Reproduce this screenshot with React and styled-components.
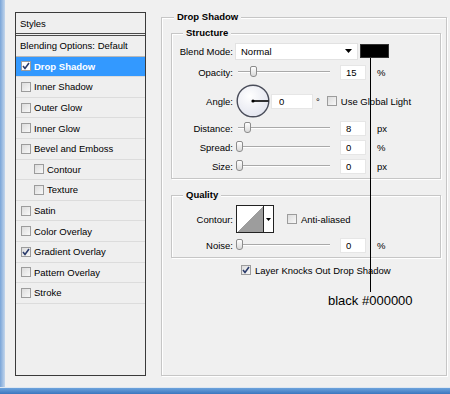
import styled, { createGlobalStyle } from 'styled-components';

const GlobalStyle = createGlobalStyle`
	html, body {
		margin: 0;
		padding: 0;
	}
	body {
		font-family: "Liberation Sans", Arial, sans-serif;
		font-size: 9.5px;
		color: #000;
	}
`;

const styleItems = [
	{ name: 'Drop Shadow', checked: true, selected: true },
	{ name: 'Inner Shadow' },
	{ name: 'Outer Glow' },
	{ name: 'Inner Glow' },
	{ name: 'Bevel and Emboss' },
	{ name: 'Contour', indent: true },
	{ name: 'Texture', indent: true },
	{ name: 'Satin' },
	{ name: 'Color Overlay' },
	{ name: 'Gradient Overlay', checked: true },
	{ name: 'Pattern Overlay' },
	{ name: 'Stroke' },
];

const Window = styled.div`
	width: 450px;
	height: 394px;
	display: flex;
	flex-direction: column;
	background: #f0f0f0;
	overflow: hidden;
`;

const Body = styled.div`
	flex: 1;
	display: flex;
	min-height: 0;
`;

const SideEdge = styled.div`
	width: 5px;
	background: linear-gradient(to right, #7aa5d8, #c3d6ec);
`;

const BottomBand = styled.div`
	height: 6px;
	border-top: 1px solid #dde7f2;
	background: linear-gradient(#6ea3dc, #3b76bf);
`;

const Content = styled.div`
	flex: 1;
	display: flex;
	align-items: flex-start;
	gap: 15px;
	padding: 12px 0 0 10px;
`;

const StylesPanel = styled.div`
	box-sizing: border-box;
	width: 131px;
	height: 364px;
	border: 1px solid #3a3a3a;
	background: #efefef;
	display: flex;
	flex-direction: column;
`;

const PanelHeader = styled.div`
	height: 20px;
	display: flex;
	align-items: center;
	padding-left: 4px;
	border-bottom: 3px double #4a4a4a;
`;

const StyleRow = styled.div`
	box-sizing: border-box;
	height: 20.6px;
	flex-shrink: 0;
	display: flex;
	align-items: center;
	gap: 3px;
	padding-left: ${(p) => (p.$indent ? 18 : p.$plain ? 4 : 5)}px;
	border-bottom: 1px solid ${(p) => (p.$dark ? '#b8b8b8' : '#dcdcdc')};
	background: ${(p) => (p.$selected ? '#3399ff' : 'transparent')};
	color: ${(p) => (p.$selected ? '#fff' : '#000')};
	font-weight: ${(p) => (p.$selected ? 'bold' : 'normal')};
`;

const Box = styled.span`
	box-sizing: border-box;
	width: 10px;
	height: 10px;
	flex-shrink: 0;
	display: inline-flex;
	align-items: center;
	justify-content: center;
	border: 1px solid #9c9c9c;
	background: ${(p) => (p.$light ? '#fff' : 'linear-gradient(135deg, #dcdcdc, #f8f8f8)')};
`;

const Checkbox = ({ checked, light }) => (
	<Box $light={light}>
		{checked && (
			<svg width="8" height="8" viewBox="0 0 8 8">
				<path d="M1 4 L3 6.5 L7 1" fill="none" stroke="#2a3b6b" strokeWidth="1.6" />
			</svg>
		)}
	</Box>
);

const GroupBox = styled.div`
	position: relative;
	box-sizing: border-box;
	border: 1px solid #c6c6c6;
	box-shadow: inset 1px 1px 0 #fff, 1px 1px 0 #fff;
`;

const OuterGroup = styled(GroupBox)`
	width: 286px;
	height: 359px;
	margin-top: 5px;
	padding: 15px 0 0 9px;
`;

const InnerGroup = styled(GroupBox)`
	width: 270px;
	margin-top: ${(p) => p.$mt || 0}px;
	padding: ${(p) => p.$pt}px 0 3px 0;
`;

const Title = styled.span`
	position: absolute;
	top: -7px;
	left: ${(p) => p.$left}px;
	padding: 0 3px;
	line-height: 12px;
	font-weight: bold;
	background: #f0f0f0;
`;

const Row = styled.div`
	display: flex;
	align-items: center;
	height: ${(p) => p.$h || 18}px;
	margin-top: ${(p) => p.$mt || 0}px;
	padding-left: ${(p) => p.$pl || 0}px;
`;

const Label = styled.span`
	width: 61px;
	flex-shrink: 0;
	text-align: right;
`;

const Select = styled.div`
	box-sizing: border-box;
	width: 123px;
	height: 17px;
	margin-left: 2px;
	display: flex;
	align-items: center;
	justify-content: space-between;
	padding: 0 5px 0 5px;
	background: #fff;
	border: 1px solid #e2e2e2;
`;

const Swatch = styled.div`
	box-sizing: border-box;
	width: 29px;
	height: 14px;
	margin-left: 2px;
	background: #000;
	border: 1px solid #333;
`;

const SliderTrack = styled.div`
	position: relative;
	width: 94px;
	height: 14px;
	margin-left: 3px;
	flex-shrink: 0;

	&::before {
		content: '';
		position: absolute;
		left: 2px;
		right: 0;
		top: 6px;
		border-top: 1px solid #a9a9a9;
		border-bottom: 1px solid #fff;
	}
`;

const Thumb = styled.span`
	position: absolute;
	top: 1px;
	box-sizing: border-box;
	width: 7px;
	height: 11px;
	border: 1px solid #8c8c8c;
	border-radius: 2px 2px 3px 3px;
	background: linear-gradient(#ffffff, #d9d9d9);
`;

const Slider = ({ pos }) => (
	<SliderTrack>
		<Thumb style={{ left: pos }} />
	</SliderTrack>
);

const Field = styled.input`
	box-sizing: border-box;
	width: ${(p) => p.$w || 26}px;
	height: 15px;
	margin-left: ${(p) => p.$ml ?? 10}px;
	padding: 0 0 0 ${(p) => p.$pad || 5}px;
	border: 1px solid #e6e6e6;
	background: #fff;
	font: inherit;
	color: #000;
	outline: none;
`;

const Unit = styled.span`
	margin-left: ${(p) => p.$ml ?? 11}px;
`;

const Dial = styled.svg`
	margin-left: 3px;
	flex-shrink: 0;
`;

const ContourPicker = styled.div`
	box-sizing: border-box;
	width: 38px;
	height: 28px;
	margin-left: 3px;
	display: flex;
	border: 1px solid #222;
	background: #fff;
`;

const ContourPreview = styled.div`
	flex: 1;
	background: linear-gradient(to bottom right, #fff 50%, #9d9d9d 50%);
`;

const ContourArrow = styled.div`
	width: 9px;
	display: flex;
	align-items: center;
	justify-content: center;
	border-left: 1px solid #222;
`;

const CheckLabel = styled.label`
	display: flex;
	align-items: center;
	gap: 4px;
	margin-left: ${(p) => p.$ml || 0}px;
`;

const Arrow = () => (
	<svg width="7" height="4" viewBox="0 0 7 4">
		<polygon points="0,0 7,0 3.5,4" fill="#000" />
	</svg>
);

const Pointer = styled.div`
	position: absolute;
	left: 208px;
	top: 40px;
	width: 1px;
	height: 234px;
	background: #000;
`;

const Note = styled.span`
	position: absolute;
	left: 166px;
	top: 275px;
	font-size: 13px;
	line-height: 15px;
`;

const SliderRow = ({ label, pos, value, unit, mt }) => (
	<Row $mt={mt}>
		<Label>{label}</Label>
		<Slider pos={pos} />
		<Field readOnly value={value} />
		<Unit>{unit}</Unit>
	</Row>
);

export default function App() {
	return (
		<Window>
			<GlobalStyle />
			<Body>
				<SideEdge />
				<Content>
					<StylesPanel>
						<PanelHeader>Styles</PanelHeader>
						<StyleRow $plain $dark>Blending Options: Default</StyleRow>
						{styleItems.map((item) => (
							<StyleRow key={item.name} $indent={item.indent} $selected={item.selected}>
								<Checkbox checked={item.checked} light={item.selected} />
								{item.name}
							</StyleRow>
						))}
					</StylesPanel>

					<OuterGroup>
						<Title $left={12}>Drop Shadow</Title>

						<InnerGroup $pt={8}>
							<Title $left={11}>Structure</Title>
							<Row>
								<Label>Blend Mode:</Label>
								<Select>
									<span>Normal</span>
									<Arrow />
								</Select>
								<Swatch />
							</Row>
							<SliderRow label="Opacity:" pos={14} value="15" unit="%" mt={3} />
							<Row $h={36} $mt={2}>
								<Label>Angle:</Label>
								<Dial width="34" height="34" viewBox="0 0 34 34">
									<defs>
										<radialGradient id="dialFill" cx="40%" cy="35%" r="70%">
											<stop offset="0" stopColor="#ffffff" />
											<stop offset="1" stopColor="#e2e4ee" />
										</radialGradient>
									</defs>
									<circle cx="17" cy="17" r="15.8" fill="url(#dialFill)" stroke="#4a4d5a" strokeWidth="1.4" />
									<line x1="17" y1="17" x2="32.5" y2="17" stroke="#000" strokeWidth="1.6" />
									<circle cx="17" cy="17" r="1.6" fill="#000" />
								</Dial>
								<Field readOnly value="0" $w={42} $ml={1} $pad={7} />
								<Unit $ml={3}>°</Unit>
								<CheckLabel $ml={7}>
									<Checkbox />
									Use Global Light
								</CheckLabel>
							</Row>
							<SliderRow label="Distance:" pos={8} value="8" unit="px" />
							<SliderRow label="Spread:" pos={0} value="0" unit="%" mt={1} />
							<SliderRow label="Size:" pos={0} value="0" unit="px" mt={1} />
						</InnerGroup>

						<InnerGroup $pt={9} $mt={16}>
							<Title $left={11}>Quality</Title>
							<Row $h={28}>
								<Label>Contour:</Label>
								<ContourPicker>
									<ContourPreview />
									<ContourArrow>
										<svg width="5" height="3" viewBox="0 0 5 3">
											<polygon points="0,0 5,0 2.5,3" fill="#000" />
										</svg>
									</ContourArrow>
								</ContourPicker>
								<CheckLabel $ml={13}>
									<Checkbox />
									Anti-aliased
								</CheckLabel>
							</Row>
							<SliderRow label="Noise:" pos={0} value="0" unit="%" mt={3} />
						</InnerGroup>

						<Row $mt={3} $pl={70}>
							<CheckLabel>
								<Checkbox checked />
								Layer Knocks Out Drop Shadow
							</CheckLabel>
						</Row>

						<Pointer />
						<Note>black #000000</Note>
					</OuterGroup>
				</Content>
			</Body>
			<BottomBand />
		</Window>
	);
}
